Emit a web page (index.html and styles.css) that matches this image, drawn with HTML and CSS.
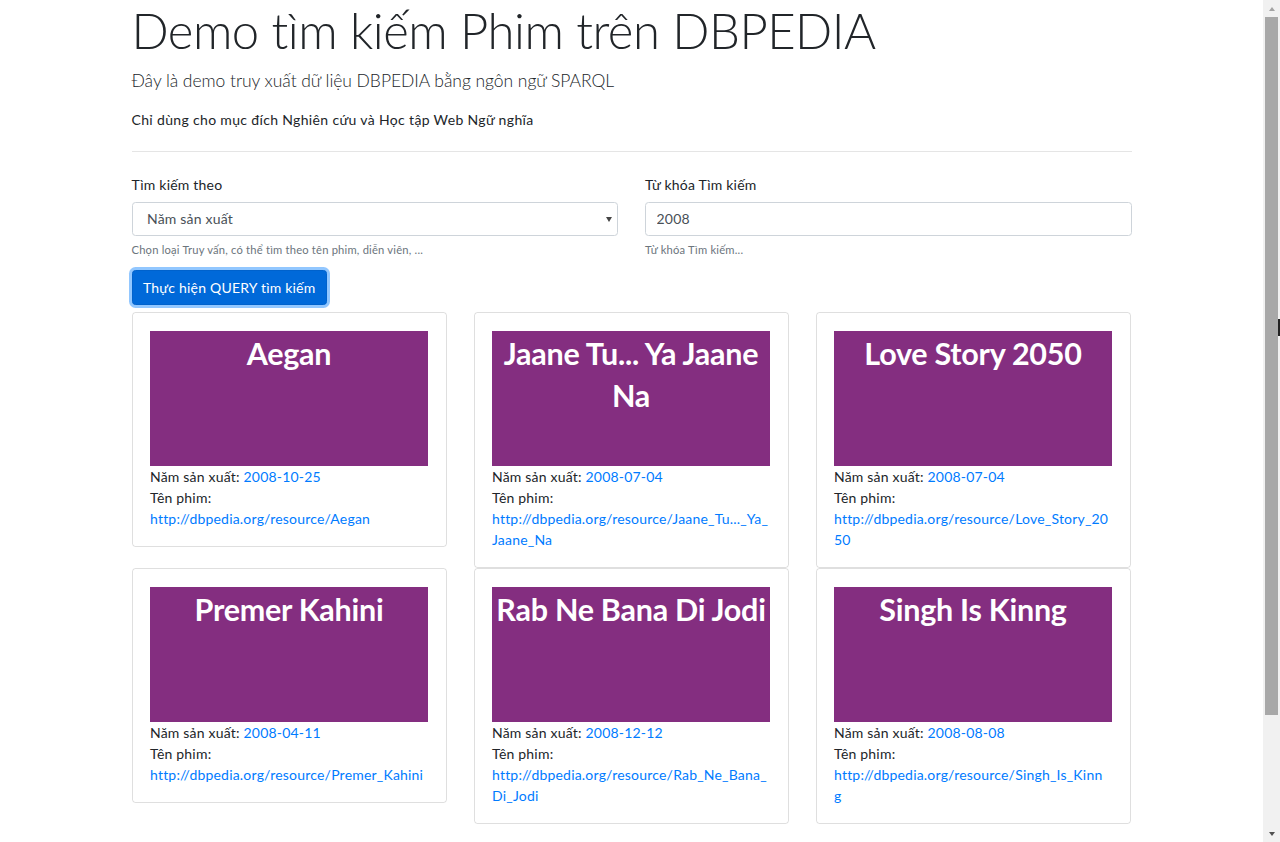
FILE: index.html
```html
<!DOCTYPE html>
<html lang="vi">
<head>
<meta charset="utf-8">
<title>Demo tìm kiếm Phim trên DBPEDIA</title>
<link rel="stylesheet" href="styles.css">
</head>
<body>
<div class="viewport">
  <main class="page">
    <div class="container">
      <header class="intro">
        <h1 class="display">Demo tìm kiếm Phim trên DBPEDIA</h1>
        <p class="lead">Đây là demo truy xuất dữ liệu DBPEDIA bằng ngôn ngữ SPARQL</p>
        <p class="note">Chỉ dùng cho mục đích Nghiên cứu và Học tập Web Ngữ nghĩa</p>
      </header>
      <hr class="divider">
      <form class="search">
        <div class="fields">
          <div class="field">
            <label class="label" for="type">Tìm kiếm theo</label>
            <div class="select-wrap">
              <select class="control select" id="type">
                <option>Năm sản xuất</option>
              </select>
            </div>
            <small class="help">Chọn loại Truy vấn, có thể tìm theo tên phim, diễn viên, ...</small>
          </div>
          <div class="field">
            <label class="label" for="kw">Từ khóa Tìm kiếm</label>
            <input class="control input" id="kw" type="text" value="2008">
            <small class="help">Từ khóa Tìm kiếm...</small>
          </div>
        </div>
        <button class="btn" type="button">Thực hiện QUERY tìm kiếm</button>
      </form>
      <section class="results">
        <article class="card">
          <div class="poster">Aegan</div>
          <p class="meta">Năm sản xuất: <a class="link" href="#">2008-10-25</a></p>
          <p class="meta">Tên phim:<br><a class="link url" href="#">http://dbpedia.org/resource/Aegan</a></p>
        </article>
        <article class="card">
          <div class="poster">Jaane Tu... Ya Jaane Na</div>
          <p class="meta">Năm sản xuất: <a class="link" href="#">2008-07-04</a></p>
          <p class="meta">Tên phim:<br><a class="link url" href="#">http://dbpedia.org/resource/Jaane_Tu..._Ya_<br>Jaane_Na</a></p>
        </article>
        <article class="card">
          <div class="poster">Love Story 2050</div>
          <p class="meta">Năm sản xuất: <a class="link" href="#">2008-07-04</a></p>
          <p class="meta">Tên phim:<br><a class="link url" href="#">http://dbpedia.org/resource/Love_Story_20<br>50</a></p>
        </article>
        <article class="card">
          <div class="poster">Premer Kahini</div>
          <p class="meta">Năm sản xuất: <a class="link" href="#">2008-04-11</a></p>
          <p class="meta">Tên phim:<br><a class="link url" href="#">http://dbpedia.org/resource/Premer_Kahini</a></p>
        </article>
        <article class="card">
          <div class="poster">Rab Ne Bana Di Jodi</div>
          <p class="meta">Năm sản xuất: <a class="link" href="#">2008-12-12</a></p>
          <p class="meta">Tên phim:<br><a class="link url" href="#">http://dbpedia.org/resource/Rab_Ne_Bana_<br>Di_Jodi</a></p>
        </article>
        <article class="card">
          <div class="poster">Singh Is Kinng</div>
          <p class="meta">Năm sản xuất: <a class="link" href="#">2008-08-08</a></p>
          <p class="meta">Tên phim:<br><a class="link url" href="#">http://dbpedia.org/resource/Singh_Is_Kinn<br>g</a></p>
        </article>
      </section>
    </div>
  </main>
  <div class="scrollbar" aria-hidden="true">
    <div class="sb-btn sb-up"></div>
    <div class="sb-track"><div class="sb-thumb"></div></div>
    <div class="sb-btn sb-down"></div>
    <div class="sb-cursor"></div>
  </div>
</div>
</body>
</html>
```
FILE: styles.css
```css
html, body {
  margin: 0;
  height: 100%;
  overflow: hidden;
}
body {
  font-family: Lato, "Liberation Sans", sans-serif;
  font-size: 14px;
  line-height: 1.5;
  letter-spacing: 0.2px;
  color: #212529;
  background: #fff;
}
.viewport {
  display: flex;
  height: 842px;
}
.page {
  flex: 1;
  min-width: 0;
  overflow: hidden;
}
.container {
  width: 1000px;
  margin: 0 auto;
}
.display {
  margin: 0 0 8px;
  padding-top: 1px;
  font-size: 49px;
  font-weight: 300;
  line-height: 1.2;
  letter-spacing: -0.5px;
}
.lead {
  margin: 0 0 15px;
  font-size: 17.5px;
  font-weight: 300;
  line-height: 1.5;
  letter-spacing: -0.05px;
}
.note {
  margin: 0 0 21px;
  line-height: 21px;
  letter-spacing: 0.34px;
}
.divider {
  margin: 0 0 22px;
  height: 0;
  border: 0;
  border-top: 1px solid rgba(0, 0, 0, 0.1);
}
.fields {
  display: grid;
  grid-template-columns: 1fr 1fr;
  column-gap: 27px;
}
.field {
  display: flex;
  flex-direction: column;
  margin-bottom: 12px;
}
.label {
  display: block;
  margin-bottom: 7px;
  line-height: 21px;
}
.control {
  box-sizing: border-box;
  width: 100%;
  height: 33.5px;
  margin: 0;
  padding: 0 10.5px;
  border: 1px solid #ced4da;
  border-radius: 3.5px;
  background: #fff;
  color: #495057;
  font-family: inherit;
  font-size: 14px;
  letter-spacing: 0.2px;
  outline: none;
}
.select {
  appearance: none;
  -webkit-appearance: none;
  padding-left: 14.5px;
}
.select-wrap {
  position: relative;
}
.select-wrap::after {
  content: "";
  position: absolute;
  right: 6px;
  top: 14.5px;
  border-left: 3px solid transparent;
  border-right: 3px solid transparent;
  border-top: 5px solid #444;
}
.help {
  display: block;
  margin-top: 6px;
  font-size: 11.2px;
  line-height: 1.5;
  color: #6c757d;
}
.btn {
  display: block;
  margin: 0 0 7.5px 0;
  padding: 5.75px 10.5px;
  border: 1px solid #0062cc;
  border-radius: 3.5px;
  background: #0069d9;
  color: #fff;
  font-family: inherit;
  font-size: 14px;
  line-height: 21px;
  letter-spacing: 0.2px;
  box-shadow: 0 0 0 3px rgba(38, 143, 255, 0.5);
  cursor: pointer;
}
.results {
  display: grid;
  grid-template-columns: repeat(3, 315px);
  column-gap: 27px;
  row-gap: 0;
  align-items: start;
}
.card {
  border: 1px solid rgba(0, 0, 0, 0.125);
  border-radius: 3.5px;
  padding: 17.5px;
}
.poster {
  height: 135px;
  box-sizing: border-box;
  padding-top: 1px;
  background: #842e80;
  color: #fff;
  text-align: center;
  font-weight: 700;
  font-size: 30.5px;
  line-height: 42px;
  letter-spacing: -0.25px;
}
.meta {
  margin: 0;
  line-height: 21px;
}
.link {
  color: #007bff;
  text-decoration: none;
}
.url {
  overflow-wrap: anywhere;
}
.scrollbar {
  position: relative;
  flex: none;
  width: 17px;
  height: 842px;
  background: #f1f1f1;
  display: flex;
  flex-direction: column;
}
.sb-btn {
  flex: none;
  height: 17px;
  display: flex;
  align-items: center;
  justify-content: center;
}
.sb-up::before {
  content: "";
  border-left: 3.5px solid transparent;
  border-right: 3.5px solid transparent;
  border-bottom: 4px solid #a3a3a3;
}
.sb-down::before {
  content: "";
  border-left: 3.5px solid transparent;
  border-right: 3.5px solid transparent;
  border-top: 4px solid #505050;
}
.sb-track {
  flex: 1;
  padding: 0 2px;
}
.sb-thumb {
  height: 698px;
  background: #a8a8a8;
}
.sb-cursor {
  position: absolute;
  right: 0;
  top: 319px;
  width: 2px;
  height: 17px;
  background: #222;
}
```
